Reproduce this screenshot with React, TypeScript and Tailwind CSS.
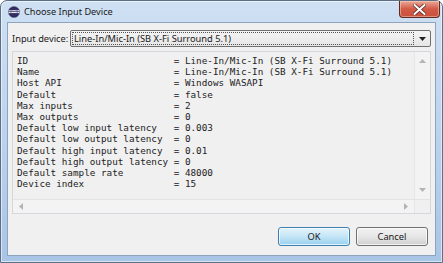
import React from 'react';

const rows: [string, string][] = [
  ['ID', 'Line-In/Mic-In (SB X-Fi Surround 5.1)'],
  ['Name', 'Line-In/Mic-In (SB X-Fi Surround 5.1)'],
  ['Host API', 'Windows WASAPI'],
  ['Default', 'false'],
  ['Max inputs', '2'],
  ['Max outputs', '0'],
  ['Default low input latency', '0.003'],
  ['Default low output latency', '0'],
  ['Default high input latency', '0.01'],
  ['Default high output latency', '0'],
  ['Default sample rate', '48000'],
  ['Device index', '15'],
];

const uiFont = { fontFamily: '"Noto Sans", "Open Sans", sans-serif' };

const Arrow: React.FC<{ dir: 'up' | 'down' | 'left' | 'right' }> = ({ dir }) => {
  const pts = {
    up: '0,4 3.5,0 7,4',
    down: '0,0 3.5,4 7,0',
    left: '4,0 0,3.5 4,7',
    right: '0,0 4,3.5 0,7',
  }[dir];
  const vertical = dir === 'up' || dir === 'down';
  return (
    <svg width={vertical ? 7 : 4} height={vertical ? 4 : 7} viewBox={vertical ? '0 0 7 4' : '0 0 4 7'}>
      <polygon points={pts} fill="#b4b4b4" />
    </svg>
  );
};

const App: React.FC = () => {
  return (
    <div className="w-[443px] h-[263px] bg-white">
      <div className="w-[443px] h-[263px] flex flex-col rounded-t-[7px] border border-[#5d6f86] bg-gradient-to-b from-[#cfe0f3] via-[#bcd3ee] to-[#a9c5e6] shadow-[inset_0_0_0_1px_rgba(255,255,255,0.55)] px-[6px] pb-[6px]">
        {/* title bar */}
        <div className="h-[21px] flex items-start relative">
          <div className="flex items-center h-[21px] pl-[1px] gap-[4px]">
            <svg width="12" height="12" viewBox="0 0 12 12">
              <circle cx="6" cy="6" r="5.6" fill="#2c2657" stroke="#6c6a95" strokeWidth="0.6" />
              <rect x="0.8" y="4.3" width="10.4" height="1" fill="#ffffff" />
              <rect x="0.6" y="6.1" width="10.8" height="1" fill="#ffffff" />
              <circle cx="6" cy="6" r="3.4" fill="none" stroke="#4b4585" strokeWidth="0.5" />
            </svg>
            <span className="text-[9.2px] text-[#1a1a1a] leading-none whitespace-nowrap" style={uiFont}>
              Choose Input Device
            </span>
          </div>
          <div className="ml-auto mr-[-4px] w-[41px] h-[17px] rounded-b-[4px] border border-t-0 border-[#5e2a22] bg-gradient-to-b from-[#e9a898] via-[#d25a46] to-[#c9503c] flex items-center justify-center shadow-[inset_0_0_0_1px_rgba(255,220,210,0.45)]">
            <svg width="13" height="11" viewBox="0 0 13 11">
              <path
                d="M1.5 1 L11.5 10 M11.5 1 L1.5 10"
                stroke="#5a2a24"
                strokeWidth="3.6"
                strokeLinecap="round"
              />
              <path
                d="M1.5 1 L11.5 10 M11.5 1 L1.5 10"
                stroke="#ffffff"
                strokeWidth="2"
                strokeLinecap="round"
              />
            </svg>
          </div>
        </div>

        {/* client area */}
        <div className="flex-1 flex flex-col bg-[#f0f0f0] border border-[#8ea4bd] pt-[7px] pl-[4px] pr-[4px] pb-[9px]" style={uiFont}>
          <div className="flex items-center h-[17px]">
            <span className="text-[9.3px] text-[#1a1a1a] w-[58px] leading-none whitespace-nowrap">Input device:</span>
            <div className="flex-1 h-[17px] flex items-center border border-[#707070] rounded-[2px] bg-gradient-to-b from-[#f4f4f4] to-[#e6e6e6] pl-[1px] pr-[4px]">
              <div className="flex-1 h-[13px] flex items-center border border-dotted border-[#555] px-[1px]">
                <span className="text-[9.3px] text-[#1a1a1a] leading-none whitespace-nowrap">Line-In/Mic-In (SB X-Fi Surround 5.1)</span>
              </div>
              <svg className="ml-[5px]" width="7" height="4" viewBox="0 0 7 4">
                <polygon points="0,0 3.5,4 7,0" fill="#222" />
              </svg>
            </div>
          </div>

          <div className="mt-[4px] flex-1 flex flex-col border border-[#d4d8dc] bg-[#f0f0f0]">
            <div className="flex-1 flex">
              <div
                className="flex-1 pl-[4px] pt-[3px] text-[9.3px] leading-[11.2px] text-[#222] whitespace-pre"
                style={{ fontFamily: '"DejaVu Sans Mono", "Liberation Mono", monospace' }}
              >
                {rows.map(([k, v]) => (
                  <div key={k}>{k.padEnd(28, ' ') + '= ' + v}</div>
                ))}
              </div>
              <div className="w-[16px] flex flex-col items-center justify-between bg-[#f3f3f3] border-l border-[#e6e6e6] py-[7px]">
                <Arrow dir="up" />
                <Arrow dir="down" />
              </div>
            </div>
            <div className="h-[14px] flex border-t border-[#e3e3e3]">
              <div className="flex-1 flex items-center justify-between px-[6px] bg-[#f3f3f3]">
                <Arrow dir="left" />
                <Arrow dir="right" />
              </div>
              <div className="w-[16px] bg-[#f0f0f0] border-l border-[#e6e6e6]" />
            </div>
          </div>

          <div className="mt-[13px] flex justify-end gap-[6px] pr-[3px]">
            <button className="w-[72px] h-[19px] rounded-[3px] border border-[#3c7fb1] bg-gradient-to-b from-[#e5f4fc] via-[#c4e5f6] to-[#98d1ef] shadow-[inset_0_0_0_1px_rgba(255,255,255,0.7)] text-[9.3px] text-[#1a1a1a] leading-none">
              OK
            </button>
            <button className="w-[72px] h-[19px] rounded-[3px] border border-[#707070] bg-gradient-to-b from-[#f2f2f2] via-[#e6e6e6] to-[#cfcfcf] shadow-[inset_0_0_0_1px_rgba(255,255,255,0.7)] text-[9.3px] text-[#1a1a1a] leading-none">
              Cancel
            </button>
          </div>
        </div>
      </div>
    </div>
  );
};

export default App;
